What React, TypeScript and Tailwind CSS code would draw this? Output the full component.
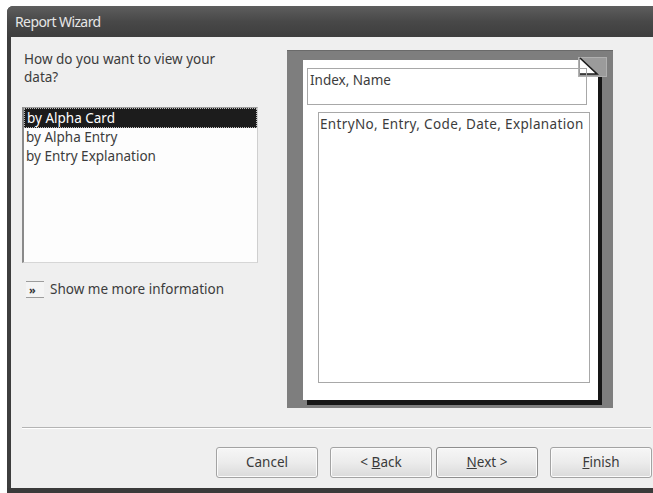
import React from "react";

const font = { fontFamily: '"Noto Sans", "Open Sans", Arial, sans-serif' };

function WizardButton({
  children,
  isDefault = false,
  className = "",
}: {
  children: React.ReactNode;
  isDefault?: boolean;
  className?: string;
}) {
  return (
    <button
      type="button"
      className={
        "h-[31px] w-[102px] rounded-[3px] border bg-gradient-to-b from-[#f6f6f6] via-[#ececec] to-[#dadada] text-[13.5px] text-[#3a3a3a] shadow-[inset_0_0_0_1px_#fbfbfb] " +
        (isDefault ? "border-[#8e8e8e] " : "border-[#a3a3a3] ") +
        className
      }
    >
      {children}
    </button>
  );
}

function PageCorner() {
  return (
    <svg
      className="absolute right-[-10px] top-[-3px]"
      width="30"
      height="20"
      viewBox="0 0 30 20"
    >
      <rect x="0" y="0" width="29" height="20" fill="#9b9b9b" />
      <rect x="0.5" y="0.5" width="28" height="19" fill="none" stroke="#b0b0b0" />
      <polygon points="2,1 2,17 19,17" fill="#ffffff" />
      <polyline points="2,1 19,17 2,17" fill="none" stroke="#1c1c1c" strokeWidth="1.6" />
    </svg>
  );
}

export default function App() {
  const items = ["by Alpha Card", "by Alpha Entry", "by Entry Explanation"];
  return (
    <div className="relative h-[493px] w-[653px] overflow-hidden bg-white" style={font}>
      <div className="ml-[7px] mt-[6px] flex h-[487px] flex-col overflow-hidden rounded-tl-[6px] bg-[#3d3d3d]">
        {/* caption */}
        <div className="flex h-[31px] shrink-0 items-center bg-gradient-to-b from-[#5e5e5e] via-[#484848] to-[#3e3e3e] pl-[8px]">
          <span className="text-[14px] tracking-[-0.6px] text-[#e6e6e6]">Report Wizard</span>
        </div>

        {/* client area */}
        <div className="ml-[4px] flex h-[451px] flex-col bg-[#efefef]">
          <div className="flex pl-[11px] pt-[13px]">
            {/* left column */}
            <div className="flex w-[236px] flex-col">
              <p className="ml-[2px] text-[13.5px] leading-[18px] text-[#3c3c3c]">
                How do you want to view your
                <br />
                data?
              </p>
              <div className="mt-[21px] h-[156px] border-b border-l-2 border-r border-t border-b-[#d6d6d6] border-l-[#8a8a8a] border-r-[#cfcfcf] border-t-[#9a9a9a] bg-[#fdfdfd]">
                {items.map((it, i) => (
                  <div
                    key={it}
                    className={
                      "h-[19.5px] pl-[2px] text-[13.5px] leading-[19px] " +
                      (i === 0
                        ? "border border-dotted border-[#bdbdbd] bg-[#1c1c1c] pl-[1px] text-white"
                        : "text-[#3c3c3c]")
                    }
                  >
                    {it}
                  </div>
                ))}
              </div>
              <div className="ml-[4px] mt-[16px] flex items-center">
                <span className="flex h-[17px] w-[18px] items-center border-b border-t border-[#9c9c9c] bg-[#f4f4f4] pl-[3px] text-[11px] font-bold leading-none text-[#333]">
                  »
                </span>
                <span className="ml-[6px] text-[13.5px] text-[#3c3c3c]">Show me more information</span>
              </div>
            </div>

            {/* layout preview */}
            <div className="ml-[29px] h-[358px] w-[326px] border-t border-t-[#6a6a6a] bg-[#7e7e7e] pl-[16px] pt-[9px]">
              <div className="relative h-[340px] w-[295px] bg-white shadow-[4px_5px_0_0_#161616]">
                <PageCorner />
                <div className="absolute left-[4px] top-[8px] h-[37px] w-[280px] border border-[#a8a8a8] pl-[2px] pt-[2px] text-[13.5px] leading-[18px] text-[#3c3c3c]">
                  Index, Name
                </div>
                <div className="absolute left-[15px] top-[52px] h-[271px] w-[272px] border border-[#a8a8a8] pl-[1px] pt-[2px] text-[13.5px] leading-[18px] tracking-[0.35px] text-[#3c3c3c]">
                  EntryNo, Entry, Code, Date, Explanation
                </div>
              </div>
            </div>
          </div>

          {/* separator */}
          <div className="ml-[11px] mr-[2px] mt-[19px] h-[2px] border-b border-t border-b-white border-t-[#b4b4b4]" />

          {/* buttons */}
          <div className="ml-[205px] mt-[18px] flex">
            <WizardButton>Cancel</WizardButton>
            <WizardButton className="ml-[12px] w-[100px]">
              &lt; <span className="underline">B</span>ack
            </WizardButton>
            <WizardButton isDefault className="ml-[4px]">
              <span className="underline">N</span>ext &gt;
            </WizardButton>
            <WizardButton className="ml-[12px]">
              <span className="underline">F</span>inish
            </WizardButton>
          </div>
        </div>
        <div className="h-[5px] bg-[#3a3a3a]" />
      </div>
    </div>
  );
}
